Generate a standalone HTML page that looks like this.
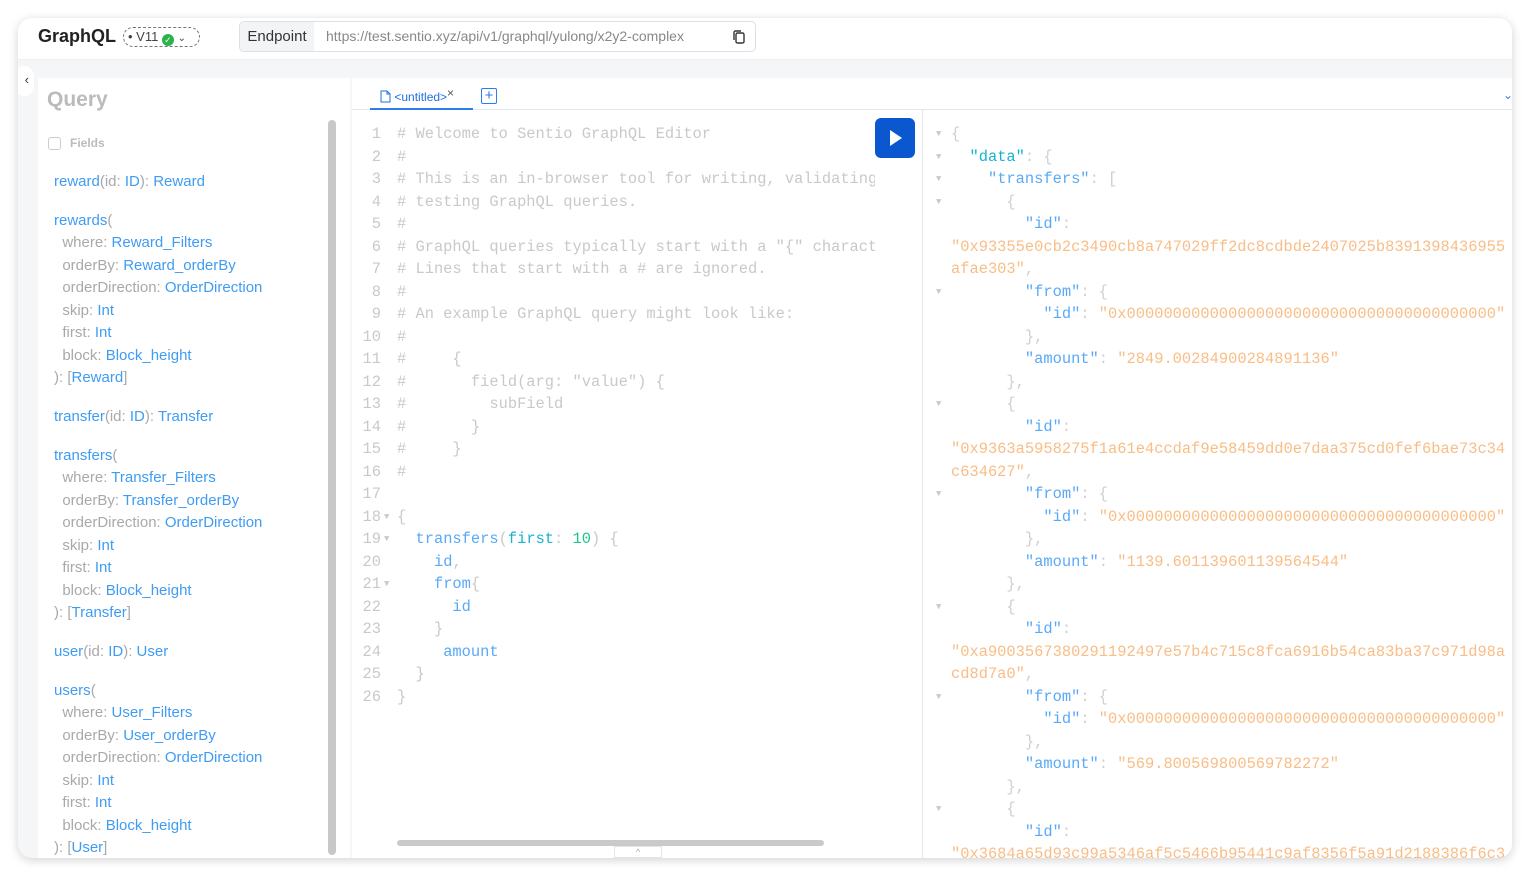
<!DOCTYPE html>
<html><head><meta charset="utf-8"><style>
*{margin:0;padding:0;box-sizing:border-box}
body{width:1530px;height:877px;background:#fff;font-family:"Liberation Sans",sans-serif;position:relative;overflow:hidden}
.card{position:absolute;left:18px;top:18px;width:1494px;height:840px;border-radius:14px;background:#f5f6f8;box-shadow:0 2px 10px rgba(0,0,0,.18);overflow:hidden}
.hdr{position:absolute;left:0;top:0;width:100%;height:42px;background:#fff;border-bottom:1px solid #eceef1}
.abs{position:absolute}
.mono{font-family:"Liberation Mono",monospace;font-size:15.4px;line-height:22.5px;white-space:pre}
.c{color:#c9c9c9}.b{color:#5aa9f7}.t{color:#14b4cf}.g{color:#1fc58a}.o{color:#f9bd86}.p{color:#cfcfcf}
.side{font-size:15px;line-height:22.5px;color:#a9a9a9}
.side div{white-space:pre;height:22.5px}
.side .b{color:#3f9cf3}
.side div.sp{height:16.3px}
</style></head><body>
<div class="card">
 <div class="hdr">
  <div class="abs" style="left:20px;top:8px;font-size:18px;font-weight:bold;color:#222">GraphQL</div>
  <div class="abs" style="left:105px;top:9px;width:77px;height:20px;border:1px dashed #777;border-radius:10px;font-size:13px;color:#444;line-height:18px;padding-left:4px">• V11 <span style="display:inline-block;width:12px;height:12px;border-radius:6px;background:#2bb24c;vertical-align:-2px;color:#fff;font-size:9px;line-height:12px;text-align:center">✓</span> <span style="font-size:10px">⌄</span></div>
  <div class="abs" style="left:221px;top:3px;width:517px;height:31px;border:1px solid #dcdfe4;border-radius:5px;background:#fff;overflow:hidden">
   <div class="abs" style="left:0;top:0;width:74px;height:31px;background:#f3f4f6;font-size:15px;color:#333;line-height:29px;text-align:center">Endpoint</div>
   <div class="abs" style="left:86px;top:0;font-size:14px;color:#888;line-height:29px">https://test.sentio.xyz/api/v1/graphql/yulong/x2y2-complex</div>
   <svg class="abs" style="left:491px;top:7px" width="16" height="16" viewBox="0 0 16 16" fill="none" stroke="#333" stroke-width="1.4"><rect x="5" y="4" width="8" height="10" rx="1.5"/><path d="M3 11V3.5A1.5 1.5 0 0 1 4.5 2H10"/></svg>
  </div>
 </div>
 <div class="abs" style="left:-4px;top:48px;width:20px;height:30px;border-radius:10px;background:#fff;font-size:13px;color:#333;text-align:right;padding-right:5px;line-height:28px">‹</div>
 <!-- left panel -->
 <div class="abs" style="left:20px;top:60px;width:312px;height:790px;background:#fff">
  <div class="abs" style="left:9px;top:10px;font-size:21px;font-weight:bold;color:#bbb">Query</div>
  <div class="abs" style="left:10px;top:59px;width:13px;height:13px;border:1px solid #ccc;border-radius:3px"></div>
  <div class="abs" style="left:32px;top:58px;font-size:12px;font-weight:bold;color:#bbb">Fields</div>
  <div class="abs" style="left:290px;top:42px;width:8px;height:735px;border-radius:4px;background:#c8c8c8"></div>
  <div class="abs side" style="left:16px;top:93px"><div><span class="b">reward</span>(id: <span class="b">ID</span>): <span class="b">Reward</span></div><div class="sp"></div><div><span class="b">rewards</span>(</div><div>  where: <span class="b">Reward_Filters</span></div><div>  orderBy: <span class="b">Reward_orderBy</span></div><div>  orderDirection: <span class="b">OrderDirection</span></div><div>  skip: <span class="b">Int</span></div><div>  first: <span class="b">Int</span></div><div>  block: <span class="b">Block_height</span></div><div>): [<span class="b">Reward</span>]</div><div class="sp"></div><div><span class="b">transfer</span>(id: <span class="b">ID</span>): <span class="b">Transfer</span></div><div class="sp"></div><div><span class="b">transfers</span>(</div><div>  where: <span class="b">Transfer_Filters</span></div><div>  orderBy: <span class="b">Transfer_orderBy</span></div><div>  orderDirection: <span class="b">OrderDirection</span></div><div>  skip: <span class="b">Int</span></div><div>  first: <span class="b">Int</span></div><div>  block: <span class="b">Block_height</span></div><div>): [<span class="b">Transfer</span>]</div><div class="sp"></div><div><span class="b">user</span>(id: <span class="b">ID</span>): <span class="b">User</span></div><div class="sp"></div><div><span class="b">users</span>(</div><div>  where: <span class="b">User_Filters</span></div><div>  orderBy: <span class="b">User_orderBy</span></div><div>  orderDirection: <span class="b">OrderDirection</span></div><div>  skip: <span class="b">Int</span></div><div>  first: <span class="b">Int</span></div><div>  block: <span class="b">Block_height</span></div><div>): [<span class="b">User</span>]</div></div>
 </div>
 <!-- editor -->
 <div class="abs" style="left:334px;top:60px;width:1160px;height:790px;background:#fff;overflow:hidden">
  <div class="abs" style="left:0;top:31px;width:1160px;height:1px;background:#e3e6ea"></div>
  <div class="abs" style="left:18px;top:8px;width:103px;height:24px;border-bottom:2px solid #2b7de9;font-size:12px;color:#1f6fe0;line-height:22px;padding-left:10px"><svg width="11" height="13" viewBox="0 0 11 13" style="vertical-align:-2px" fill="none" stroke="#1f6fe0" stroke-width="1"><path d="M1 1h6l3 3v8H1z M7 1v3h3"/></svg> &lt;untitled&gt;<span style="position:relative;top:-4px;color:#555">×</span></div>
  <div class="abs" style="left:129px;top:10px;width:16px;height:16px;border:1px solid #2b7de9;border-radius:2px;color:#2b7de9;font-size:15px;line-height:13px;text-align:center">+</div>
  <div class="abs" style="left:1151px;top:10px;color:#2b7de9;font-size:12px">⌄</div>
  <div class="abs" style="left:570px;top:32px;width:1px;height:760px;background:#e8e8e8"></div>
  <div class="abs mono c" style="left:0px;top:45px;width:29px;text-align:right">1
2
3
4
5
6
7
8
9
10
11
12
13
14
15
16
17
18
19
20
21
22
23
24
25
26</div>
  <div class="abs mono c" style="left:32px;top:45px;font-size:9px;line-height:22.5px"><br><br><br><br><br><br><br><br><br><br><br><br><br><br><br><br><br>▼<br>▼<br><br>▼</div>
  <div class="abs mono c" style="left:45px;top:45px;width:478px;overflow:hidden"># Welcome to Sentio GraphQL Editor
#
# This is an in-browser tool for writing, validating, and
# testing GraphQL queries.
#
# GraphQL queries typically start with a "{" character.
# Lines that start with a # are ignored.
#
# An example GraphQL query might look like:
#
#     {
#       field(arg: "value") {
#         subField
#       }
#     }
#

{
  <span class="b">transfers</span>(<span class="t">first</span>: <span class="g">10</span>) {
    <span class="b">id</span>,
    <span class="b">from</span>{
      <span class="b">id</span>
    }
     <span class="b">amount</span>
  }
}</div>
  <div class="abs" style="left:523px;top:40px;width:40px;height:40px;border-radius:6px;background:#0b57d0"><svg width="40" height="40"><path d="M15 12L27 20L15 28Z" fill="#fff"/></svg></div>
  <div class="abs" style="left:45px;top:762px;width:427px;height:6px;border-radius:3px;background:#c9cacc"></div>
  <div class="abs" style="left:262px;top:768px;width:48px;height:12px;border:1px solid #e4e4e4;font-size:9px;color:#aaa;text-align:center">^</div>
  <!-- results -->
  <div class="abs mono c" style="left:584px;top:45px;font-size:9px;line-height:22.5px">▼<br>▼<br>▼<br>▼<br><br><br><br>▼<br><br><br><br><br>▼<br><br><br><br>▼<br><br><br><br><br>▼<br><br><br><br>▼<br><br><br><br><br>▼</div>
  <div class="abs mono p" style="left:599px;top:45px;width:554px;overflow:hidden">{
  <span class="t">"data"</span>: {
    <span class="b">"transfers"</span>: [
      {
        <span class="b">"id"</span>:
<span class="o">"0x93355e0cb2c3490cb8a747029ff2dc8cdbde2407025b8391398436955
afae303"</span>,
        <span class="b">"from"</span>: {
          <span class="b">"id"</span>: <span class="o">"0x0000000000000000000000000000000000000000"</span>
        },
        <span class="b">"amount"</span>: <span class="o">"2849.00284900284891136"</span>
      },
      {
        <span class="b">"id"</span>:
<span class="o">"0x9363a5958275f1a61e4ccdaf9e58459dd0e7daa375cd0fef6bae73c34
c634627"</span>,
        <span class="b">"from"</span>: {
          <span class="b">"id"</span>: <span class="o">"0x0000000000000000000000000000000000000000"</span>
        },
        <span class="b">"amount"</span>: <span class="o">"1139.601139601139564544"</span>
      },
      {
        <span class="b">"id"</span>:
<span class="o">"0xa9003567380291192497e57b4c715c8fca6916b54ca83ba37c971d98a
cd8d7a0"</span>,
        <span class="b">"from"</span>: {
          <span class="b">"id"</span>: <span class="o">"0x0000000000000000000000000000000000000000"</span>
        },
        <span class="b">"amount"</span>: <span class="o">"569.800569800569782272"</span>
      },
      {
        <span class="b">"id"</span>:
<span class="o">"0x3684a65d93c99a5346af5c5466b95441c9af8356f5a91d2188386f6c3</span></div>
 </div>
</div>
</body></html>
